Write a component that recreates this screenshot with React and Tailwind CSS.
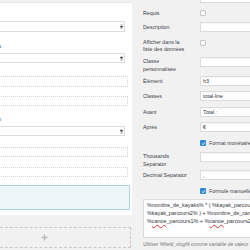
import React from "react";

const base = "font-['Liberation_Sans',Arial,sans-serif]";

function Row({ className, label, labelClass = "pt-[1px] leading-[8px]", children }) {
  return (
    <div className={`flex shrink-0 ${className}`}>
      <div className={`w-[57px] shrink-0 text-[5.3px] text-[#3c434a] whitespace-nowrap ${labelClass}`}>
        {label}
      </div>
      {children}
    </div>
  );
}

function Input({ value }) {
  return (
    <div className="h-[10px] w-[80px] shrink-0 border border-[#dcdcdc] bg-white pl-[2px] text-[5.3px] leading-[8px] text-[#32373c] shadow-[inset_0_1px_1px_rgba(0,0,0,0.04)]">
      {value}
    </div>
  );
}

function Check({ checked }) {
  if (checked) {
    return (
      <div className="mt-[1px] flex h-[6px] w-[6px] shrink-0 items-center justify-center rounded-[1px] bg-[#2f8ad8]">
        <svg width="5" height="5" viewBox="0 0 10 10">
          <path d="M2 5.2 L4.2 7.4 L8 2.8" fill="none" stroke="white" strokeWidth="1.8" />
        </svg>
      </div>
    );
  }
  return (
    <div className="mt-[1px] h-[6px] w-[6px] shrink-0 rounded-[1px] border border-[#c3c6c9] bg-[#fbfbfb]" />
  );
}

function Select({ className }) {
  return (
    <div className={`ml-[-10px] flex w-[135px] shrink-0 items-center justify-end border border-[#dddddd] bg-white ${className}`}>
      <div className="mr-[1px] flex h-[5px] w-[3px] items-center justify-center bg-[#d8d8d8]">
        <svg width="3" height="2" viewBox="0 0 3 2">
          <path d="M0 0 L3 0 L1.5 2 Z" fill="#333" />
        </svg>
      </div>
    </div>
  );
}

function Dotted({ className }) {
  return <div className={`ml-[-10px] w-[138px] shrink-0 border border-dotted border-[#d2d2d2] ${className}`} />;
}

const sq = "underline decoration-wavy decoration-[#e0393e] decoration-[0.6px] underline-offset-[1px]";

export default function App() {
  return (
    <div className={`flex h-[250px] w-[250px] overflow-hidden bg-[#f1f1f1] ${base}`}>
      {/* colonne gauche */}
      <div className="flex w-[132px] shrink-0 flex-col">
        <div className="flex h-[215px] shrink-0 flex-col bg-white">
          <div className="h-[3px] shrink-0 border-b border-[#e6e6e6] bg-[#f1f1f1]" />
          <Select className="mt-[18px] h-[11px]" />
          <div className="ml-[-2px] mt-[10px] h-[8px] shrink-0 text-[5.3px] leading-[8px] text-[#444]">a</div>
          <Select className="mt-[3px] h-[10px]" />
          <Dotted className="mt-[13px] h-[11px]" />
          <Dotted className="mt-[9px] h-[10px]" />
          <div className="ml-[-2px] mt-[9px] h-[8px] shrink-0 text-[5.3px] leading-[8px] text-[#6b7b90]">a</div>
          <Select className="mt-[3px] h-[10px]" />
          <Dotted className="mt-[11px] h-[10px]" />
          <Dotted className="mt-[10px] h-[10px]" />
          <div className="ml-[-10px] mt-[8px] h-[25px] w-[140px] shrink-0 border-y border-r border-[#a9d4ea] bg-[#eef5f8]" />
        </div>
        <div className="ml-[-10px] mt-[12px] flex h-[21px] w-[141px] shrink-0 items-center border border-dashed border-[#c9c9c9]">
          <svg className="ml-[50px]" width="7" height="7" viewBox="0 0 7 7">
            <path d="M3.5 0.5 V6.5 M0.5 3.5 H6.5" stroke="#b8b8b8" strokeWidth="1.4" />
          </svg>
        </div>
      </div>

      {/* colonne droite */}
      <div className="flex flex-col pl-[11px]">
        <Row className="mt-[-7px]" label="">
          <Input value="" />
        </Row>
        <Row className="mt-[6px]" label="Requis" labelClass="leading-[8px]">
          <Check />
        </Row>
        <Row className="mt-[5px]" label="Description">
          <Input value="" />
        </Row>
        <Row className="mt-[7px]" label={<>Afficher dans la<br />liste des données</>} labelClass="leading-[7px]">
          <Check />
        </Row>
        <Row className="mt-[4px]" label={<>Classe<br />personnalisée</>} labelClass="leading-[8px]">
          <Input value="" />
        </Row>
        <Row className="mt-[3px]" label="Élément">
          <Input value="h3" />
        </Row>
        <Row className="mt-[5px]" label="Classes">
          <Input value="total-line" />
        </Row>
        <Row className="mt-[6px]" label="Avant">
          <Input value="Total :" />
        </Row>
        <Row className="mt-[5px]" label="Après">
          <Input value="€" />
        </Row>
        <Row className="mt-[7px]" label="" labelClass="leading-[8px]">
          <Check checked />
          <span className="ml-[3px] whitespace-nowrap text-[5.3px] leading-[8px] text-[#3c434a]">Format monétaire</span>
        </Row>
        <Row className="mt-[5px]" label={<>Thousands<br />Separator</>} labelClass="leading-[8px]">
          <Input value="" />
        </Row>
        <Row className="mt-[2px]" label="Decimal Separator">
          <Input value="," />
        </Row>
        <Row className="mt-[7px]" label="" labelClass="leading-[8px]">
          <Check checked />
          <span className="ml-[3px] whitespace-nowrap text-[5.3px] leading-[8px] text-[#3c434a]">Formule manuelle</span>
        </Row>
        <div className="mt-[4px] h-[39px] w-[140px] shrink-0 whitespace-nowrap border border-[#dcdcdc] bg-white pl-[3px] pt-[1px] text-[5.4px] leading-[8px] text-[#32373c]">
          <div>%nombre_de_kayaks% * ( %kayak_parcours1% + %kayak_parcours3% )</div>
          <div>%kayak_parcours2% ) + %nombre_de_canoes% * (</div>
          <div>%<span className={sq}>canoe</span>_parcours1% + %<span className={sq}>canoe</span>_parcours2% )</div>
        </div>
        <div className="mt-[2px] whitespace-nowrap text-[5px] italic leading-[8px] text-[#777]">
          Utiliser %field_slug% comme variable de valeur
        </div>
      </div>
    </div>
  );
}
